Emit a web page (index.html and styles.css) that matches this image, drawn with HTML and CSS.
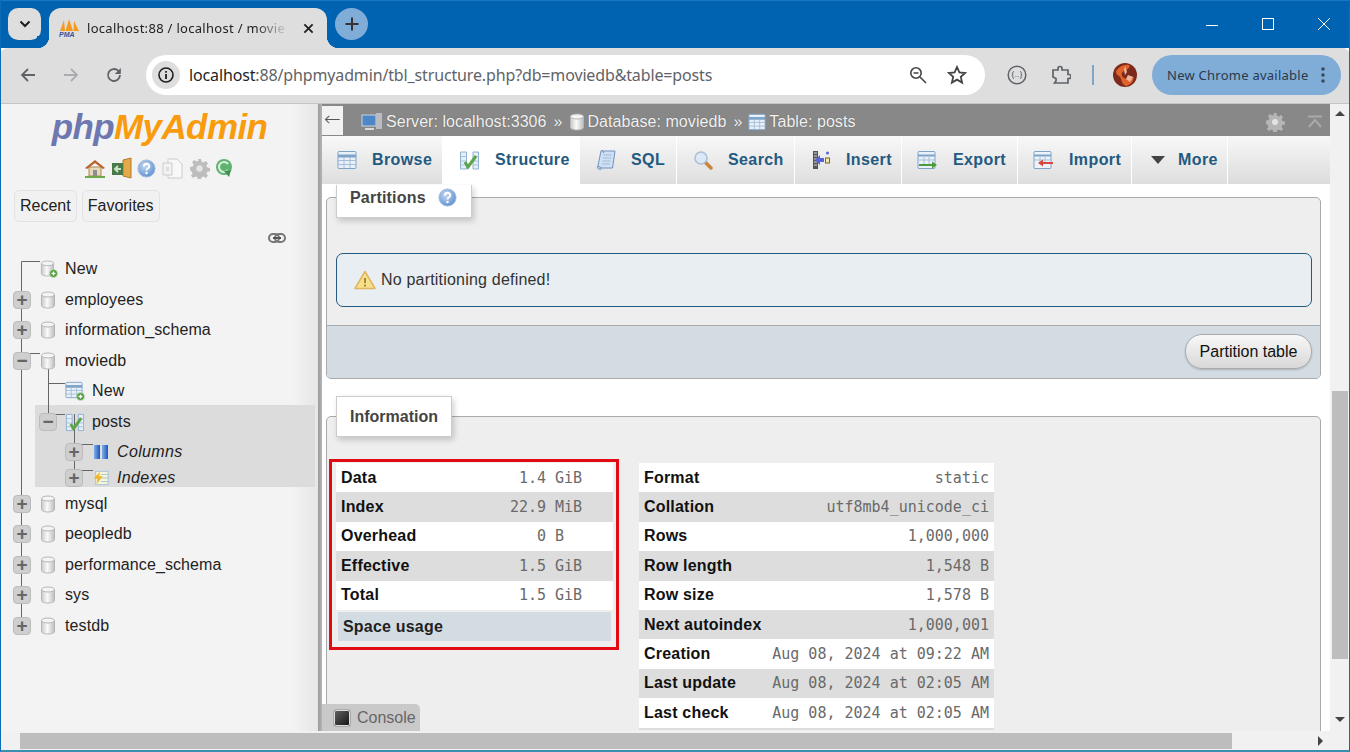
FILE: index.html
```html
<!DOCTYPE html>
<html lang="en">

<head>
    <meta charset="UTF-8">
    <meta name="viewport" content="width=device-width, initial-scale=1.0">
    <title>localhost:88 / localhost / moviedb / posts</title>
    <link rel="stylesheet" href="styles.css">
</head>

<body>

    <!-- Shared icons -->
    <svg class="icon-sprite" width="0" height="0">
        <defs>
            <linearGradient id="dbFill" x1="0" y1="0" x2="1" y2="0">
                <stop offset="0" stop-color="#c9c9c9"/><stop offset=".45" stop-color="#fafafa"/><stop offset="1" stop-color="#bdbdbd"/>
            </linearGradient>
            <linearGradient id="blueBar" x1="0" y1="0" x2="1" y2="0">
                <stop offset="0" stop-color="#7fb0ea"/><stop offset="1" stop-color="#1d55b8"/>
            </linearGradient>
            <radialGradient id="helpFill" cx=".4" cy=".35" r=".7">
                <stop offset="0" stop-color="#c5d8f2"/><stop offset="1" stop-color="#5d8fcf"/>
            </radialGradient>
        </defs>
        <symbol id="i-db" viewBox="0 0 16 18">
            <path d="M1.5 3.5v11c0 1.500 3 2.500 6.500 2.500s6.500-1 6.500-2.500v-11z" fill="url(#dbFill)" stroke="#b5b5b5"/>
            <ellipse cx="8" cy="3.500" rx="6.500" ry="2.500" fill="#f4f4f4" stroke="#b5b5b5"/>
        </symbol>
        <symbol id="i-db-new" viewBox="0 0 18 18">
            <use href="#i-db" width="15" height="17"/>
            <circle cx="13.500" cy="13.500" r="4" fill="#4d9a3a" stroke="#d8ead2" stroke-width=".7"/>
            <path d="M11.500 13.500h4M13.500 11.500v4" stroke="#fff" stroke-width="1.300"/>
        </symbol>
        <symbol id="i-table" viewBox="0 0 20 20">
            <rect x="1" y="1.500" width="18" height="17" rx="1" fill="#e9f0f8" stroke="#7ea3c9"/>
            <path d="M1 6h18" stroke="#7ea3c9" stroke-width="3"/>
            <path d="M7 7v11M13 7v11M1 10.500h18M1 14.500h18" stroke="#a4bfdb"/>
        </symbol>
        <symbol id="i-table-new" viewBox="0 0 20 20">
            <use href="#i-table" width="18" height="18"/>
            <circle cx="15.500" cy="15.500" r="4" fill="#4d9a3a" stroke="#d8ead2" stroke-width=".7"/>
            <path d="M13.500 15.500h4M15.500 13.500v4" stroke="#fff" stroke-width="1.300"/>
        </symbol>
        <symbol id="i-structure" viewBox="0 0 21 20">
            <path d="M1.500 2h6v17h-6zM14 2h5.500v17H14z" fill="#e6eef7" stroke="#8fb0d0"/>
            <path d="M1.500 6.500h6M1.500 11h6M1.500 15h6M14 6.500h5.500M14 11h5.500M14 15h5.500" stroke="#a9c3dc"/>
            <path d="M6 12l3 5 8-11" fill="none" stroke="#5aa548" stroke-width="3"/>
        </symbol>
        <symbol id="i-sql" viewBox="0 0 20 22">
            <path d="M5 2h14l-2.500 17H1.500z" fill="#cfe0f3" stroke="#6e93bd"/>
            <path d="M7.500 6h8M7 9h8M6.500 12h8M6 15h8" stroke="#9fbbd8"/>
            <path d="M1.500 19c0-2 3-2 3.500 0s-1 2-3.500 0zM5 2c1.500-1 3 0 2.500 2" fill="#b5cce6" stroke="#6e93bd"/>
        </symbol>
        <symbol id="i-search" viewBox="0 0 20 20">
            <path d="M12 12l6 6" stroke="#c9853a" stroke-width="3.500" stroke-linecap="round"/>
            <circle cx="8" cy="8" r="6" fill="#dbe9f7" stroke="#a8bfd6" stroke-width="1.500"/>
        </symbol>
        <symbol id="i-insert" viewBox="0 0 20 20">
            <path d="M2 1h5v18H2z" fill="#555"/>
            <path d="M3 3h3M3 6h3M3 9h3M3 12h3M3 15h3" stroke="#ddd"/>
            <path d="M4 10l5-5v3h4v4H9v3z" fill="#5a62d8"/>
            <rect x="14.500" y="8" width="4" height="5" fill="#f0e9a8" stroke="#7a6a20"/>
            <circle cx="16.500" cy="3" r="1.500" fill="#5a62d8"/>
        </symbol>
        <symbol id="i-export" viewBox="0 0 21 20">
            <rect x="1" y="1.500" width="17" height="17" rx="1" fill="#e9f0f8" stroke="#7ea3c9"/>
            <path d="M1 5.500h17" stroke="#7ea3c9" stroke-width="2"/>
            <path d="M7 7v7M12 7v7M1 10h17" stroke="#a4bfdb"/>
            <path d="M2 14h13v-2.500l5 3.500-5 3.500V16H2z" fill="#4d9a3a"/>
        </symbol>
        <symbol id="i-import" viewBox="0 0 21 20">
            <rect x="1" y="1.500" width="17" height="17" rx="1" fill="#eef3f9" stroke="#7ea3c9"/>
            <path d="M1 5.500h17" stroke="#7ea3c9" stroke-width="2"/>
            <path d="M7 7v7M12 7v7M1 10h17" stroke="#a4bfdb"/>
            <path d="M20 12H10V9.500L5 13l5 3.500V14h10z" fill="#d9463e"/>
        </symbol>
        <symbol id="i-gear" viewBox="0 0 20 20">
            <path d="M8.500 1h3l.5 2.600 1.800.8 2.200-1.500 2.100 2.100-1.500 2.200.8 1.800 2.600.5v3l-2.600.5-.8 1.800 1.500 2.200-2.100 2.100-2.200-1.500-1.800.8-.5 2.600h-3l-.5-2.600-1.800-.8-2.200 1.500-2.100-2.100 1.500-2.200-.8-1.800L1 11.500v-3l2.600-.5.8-1.800-1.500-2.200L5 1.900l2.200 1.500L9 2.600z" fill="currentColor"/>
            <circle cx="10" cy="10" r="3" fill="#f3f3f3" fill-opacity=".75"/>
        </symbol>
        <symbol id="i-help" viewBox="0 0 20 20">
            <circle cx="10" cy="10" r="9" fill="url(#helpFill)" stroke="#9db9de"/>
            <path d="M7.200 7.800c0-3.600 5.800-3.600 5.800-.2 0 2.200-3 2.200-3 4.400" fill="none" stroke="#fff" stroke-width="2"/>
            <circle cx="10" cy="14.800" r="1.300" fill="#fff"/>
        </symbol>
    </svg>

    <div class="window">

        <!-- Browser tab strip -->
        <div class="tabstrip">
            <div class="tab-menu">
                <svg width="14" height="10" viewBox="0 0 14 10"><path d="M2.500 2.500L7 7l4.500-4.500" fill="none" stroke="#1f1f1f" stroke-width="2"/></svg>
            </div>
            <div class="browser-tab">
                <svg class="favicon" width="21" height="19" viewBox="0 0 21 19">
                    <path d="M5 1L1 12h5zM10 0L6.500 12H14zM15 2l-.5 10H20z" fill="#f39a1f"/>
                    <text x="0" y="18" class="favicon-text">PMA</text>
                </svg>
                <span class="tab-title">localhost:88 / localhost / movie</span>
                <svg class="tab-close" width="11" height="11" viewBox="0 0 12 12"><path d="M1.500 1.500l9 9M10.500 1.500l-9 9" stroke="#1f1f1f" stroke-width="2"/></svg>
            </div>
            <div class="new-tab">
                <svg width="16" height="16" viewBox="0 0 16 16"><path d="M8 1.500v13M1.500 8h13" stroke="#333" stroke-width="2"/></svg>
            </div>
            <div class="window-controls">
                <svg width="12" height="12" viewBox="0 0 12 12"><path d="M0 7.500h12" stroke="#fff"/></svg>
                <svg width="12" height="12" viewBox="0 0 12 12"><rect x=".5" y=".5" width="11" height="11" fill="none" stroke="#fff"/></svg>
                <svg width="12" height="12" viewBox="0 0 12 12"><path d="M0 0l12 12M12 0L0 12" stroke="#fff"/></svg>
            </div>
        </div>

        <!-- Browser toolbar -->
        <div class="toolbar">
            <svg class="nav-back" width="16" height="16" viewBox="0 0 16 16"><path d="M15 8H2M8 2L2 8l6 6" fill="none" stroke="#5f6368" stroke-width="1.800"/></svg>
            <svg class="nav-forward" width="16" height="16" viewBox="0 0 16 16"><path d="M1 8h13M8 2l6 6-6 6" fill="none" stroke="#a9abae" stroke-width="1.800"/></svg>
            <svg class="nav-reload" width="16" height="16" viewBox="0 0 16 16"><path d="M14 8a6 6 0 1 1-1.800-4.300L14 5.500" fill="none" stroke="#5f6368" stroke-width="1.800"/><path d="M14.800 1v6h-6z" fill="#5f6368"/></svg>
            <div class="address-bar">
                <span class="site-info">
                    <svg width="16" height="16" viewBox="0 0 16 16"><circle cx="8" cy="8" r="7" fill="none" stroke="#1f1f1f" stroke-width="1.600"/><path d="M8 7v5M8 4v1.800" stroke="#1f1f1f" stroke-width="1.800"/></svg>
                </span>
                <span class="url"><span class="url-host">localhost</span>:88/phpmyadmin/tbl_structure.php?db=moviedb&amp;table=posts</span>
                <svg class="addr-zoom" width="18" height="18" viewBox="0 0 18 18"><circle cx="7" cy="7" r="5.200" fill="none" stroke="#444" stroke-width="1.600"/><path d="M4.500 7h5M11 11l6 6" stroke="#444" stroke-width="1.600"/></svg>
                <svg class="addr-star" width="20" height="20" viewBox="0 0 20 20"><path d="M10 2l2.400 5.400 5.800.6-4.400 3.900 1.300 5.700-5.100-3-5.100 3 1.300-5.700L1.800 8l5.800-.6z" fill="none" stroke="#444" stroke-width="1.800"/></svg>
            </div>
            <svg class="tool-code" width="20" height="20" viewBox="0 0 20 20"><circle cx="10" cy="10" r="8.800" fill="none" stroke="#5f6368" stroke-width="1.500"/><path d="M7 6.500c-1.500 0-1.200 1.300-1.200 2.300S5.300 10 4.800 10c.5 0 1 .2 1 1.200s-.3 2.300 1.200 2.300M13 6.500c1.500 0 1.200 1.300 1.200 2.300s.5 1.200 1 1.200c-.5 0-1 .2-1 1.200s.3 2.300-1.200 2.300" fill="none" stroke="#5f6368"/><path d="M8.500 11.500h.8M10.700 11.500h.8" stroke="#5f6368"/></svg>
            <svg class="tool-puzzle" width="20" height="20" viewBox="0 0 20 20"><path d="M2 5h5V3.500a2 2 0 0 1 4 0V5h6v4.500h1a2 2 0 0 1 0 4h-1V18H3.500L5 16v-2.500L2 12z" fill="none" stroke="#5f6368" stroke-width="1.700"/></svg>
            <span class="tool-sep"></span>
            <svg class="avatar" width="24" height="24" viewBox="0 0 24 24">
                <circle cx="12" cy="12" r="12" fill="#7c2a1c"/>
                <path d="M3 8c4-5 8-7 13-6 2 2-2 5-5 6s-3 5 0 7 7 1 9-2c2 4-2 9-7 10-5-2-4-7-6-9s-4-2-4-6z" fill="#e2632a"/>
                <path d="M12 3l2 6-2 3-1-5zM15 12l5 2-3 5-4-3z" fill="#e9b7a0"/>
            </svg>
            <div class="update-pill">
                <span>New Chrome available</span>
                <svg width="4" height="16" viewBox="0 0 4 16"><circle cx="2" cy="2" r="1.800" fill="#3c4a5a"/><circle cx="2" cy="8" r="1.800" fill="#3c4a5a"/><circle cx="2" cy="14" r="1.800" fill="#3c4a5a"/></svg>
            </div>
        </div>

        <div class="page">

            <!-- phpMyAdmin navigation -->
            <aside class="sidebar">
                <div class="logo"><span class="logo-php">php</span><span class="logo-my">MyAdmin</span></div>

                <div class="quick-icons">
                    <svg width="20" height="20" viewBox="0 0 20 20"><path d="M4 9h12v9H4z" fill="#e8d9b8" stroke="#a8875a"/><path d="M8 12h4v6H8z" fill="#8a8d91"/><path d="M0 10l10-8 10 8-2 1-8-6-8 6z" fill="#b8622c"/><path d="M0 19h20" stroke="#6fa84a" stroke-width="2"/></svg>
                    <svg width="21" height="22" viewBox="0 0 21 22"><path d="M12 3l8-2v20l-8-2z" fill="#e5a94a" stroke="#b27a2a"/><rect x="1" y="6" width="11" height="12" fill="#4a7a4a"/><path d="M10 12H4M7 9l-3 3 3 3" fill="none" stroke="#c8e6c0" stroke-width="2"/></svg>
                    <svg width="19" height="19"><use href="#i-help"/></svg>
                    <svg width="21" height="21" viewBox="0 0 21 21"><path d="M6 1h9l5 5v14H6z" fill="#f8f8f8" stroke="#ccc"/><path d="M1 5h9v12H1z" fill="#f2f2f2" stroke="#ccc"/><path d="M4 9h3v4H4z" fill="#ddd"/></svg>
                    <svg class="quick-gear" width="21" height="21"><use href="#i-gear"/></svg>
                    <svg width="18" height="20" viewBox="0 0 18 20"><circle cx="9" cy="9" r="8" fill="#5eb36e"/><path d="M13 6a5 5 0 1 0 0 6" fill="none" stroke="#d8eedc" stroke-width="2.200"/><path d="M9 13l7-1-2 7z" fill="#3f8f50"/></svg>
                </div>

                <div class="recent-row">
                    <span class="nav-btn">Recent</span>
                    <span class="nav-btn">Favorites</span>
                </div>

                <div class="link-row">
                    <svg width="18" height="10" viewBox="0 0 18 10"><rect x="1" y="1" width="10" height="8" rx="4" fill="none" stroke="#777" stroke-width="2"/><rect x="7" y="1" width="10" height="8" rx="4" fill="none" stroke="#777" stroke-width="2"/><path d="M5 5h8" stroke="#555" stroke-width="2"/></svg>
                </div>

                <div class="tree">
                    <!-- Tree guide lines -->
                    <svg class="tree-lines" width="120" height="380" viewBox="0 0 120 380">
                        <path d="M21.500 10.500V367M21.500 10.500H40M21.500 102.500H40M48.500 102v61M48.500 132.500H65M48.500 163.500H65M74.500 163v56M74.500 193.500H93M74.500 219.500H93" fill="none" stroke="#666"/>
                    </svg>

                    <div class="tree-row"><svg class="db-icon wide"><use href="#i-db-new"/></svg><span class="tree-new">New</span></div>
                    <div class="tree-row"><span class="expander">+</span><svg class="db-icon"><use href="#i-db"/></svg><span>employees</span></div>
                    <div class="tree-row"><span class="expander">+</span><svg class="db-icon"><use href="#i-db"/></svg><span>information_schema</span></div>
                    <div class="tree-row"><span class="expander">&minus;</span><svg class="db-icon"><use href="#i-db"/></svg><span>moviedb</span></div>
                    <div class="tree-row tree-sub"><svg class="tbl-icon"><use href="#i-table-new"/></svg><span>New</span></div>

                    <div class="tree-current">
                        <div class="tree-row tree-table"><span class="expander">&minus;</span><svg class="tbl-icon"><use href="#i-structure"/></svg><span>posts</span></div>
                        <div class="tree-row tree-child">
                            <span class="expander">+</span>
                            <svg class="child-icon" viewBox="0 0 16 16"><rect x="1" y="1" width="6" height="14" fill="url(#blueBar)"/><rect x="9" y="1" width="6" height="14" fill="url(#blueBar)"/></svg>
                            <em>Columns</em>
                        </div>
                        <div class="tree-row tree-child tree-last">
                            <span class="expander">+</span>
                            <svg class="child-icon" viewBox="0 0 18 18"><rect x="3" y="1.500" width="14" height="15" fill="#f3f6d8" stroke="#a6bfd6"/><path d="M9 5h8M9 9h8M9 13h8" stroke="#a6bfd6"/><path d="M1 9l7-7-1 5h4l-7 9 1-6z" fill="#f0b72a"/></svg>
                            <em>Indexes</em>
                        </div>
                    </div>

                    <div class="tree-row tree-after"><span class="expander">+</span><svg class="db-icon"><use href="#i-db"/></svg><span>mysql</span></div>
                    <div class="tree-row"><span class="expander">+</span><svg class="db-icon"><use href="#i-db"/></svg><span>peopledb</span></div>
                    <div class="tree-row"><span class="expander">+</span><svg class="db-icon"><use href="#i-db"/></svg><span>performance_schema</span></div>
                    <div class="tree-row"><span class="expander">+</span><svg class="db-icon"><use href="#i-db"/></svg><span>sys</span></div>
                    <div class="tree-row"><span class="expander">+</span><svg class="db-icon"><use href="#i-db"/></svg><span>testdb</span></div>
                </div>
            </aside>

            <div class="splitter"></div>

            <!-- Main panel -->
            <main class="main">
                <div class="breadcrumb">
                    <span class="back-box">&#8592;</span>
                    <svg class="crumb-icon" width="22" height="20" viewBox="0 0 22 20"><rect x="1" y="3" width="14" height="11" fill="#4d87c7" stroke="#c8d4e0"/><path d="M15 1h6v16h-6z" fill="#b9bdc2"/><path d="M4 17h9" stroke="#d8d8d8" stroke-width="2"/></svg>
                    <span>Server: localhost:3306</span><span class="crumb-sep">&raquo;</span>
                    <svg class="crumb-icon" width="16" height="18"><use href="#i-db"/></svg>
                    <span>Database: moviedb</span><span class="crumb-sep">&raquo;</span>
                    <svg class="crumb-icon" width="18" height="18"><use href="#i-table"/></svg>
                    <span>Table: posts</span>
                    <svg class="crumb-gear" width="20" height="20"><use href="#i-gear"/></svg>
                    <svg class="crumb-top" width="16" height="14" viewBox="0 0 16 14"><path d="M1 1.500h14" stroke="#aaa" stroke-width="2"/><path d="M2 12l6-7 6 7" fill="none" stroke="#aaa" stroke-width="2"/></svg>
                </div>

                <nav class="tabs">
                    <a class="tab tab-browse"><svg width="20" height="20"><use href="#i-table"/></svg>Browse</a>
                    <a class="tab tab-structure active"><svg width="21" height="20"><use href="#i-structure"/></svg>Structure</a>
                    <a class="tab tab-sql"><svg width="20" height="22"><use href="#i-sql"/></svg>SQL</a>
                    <a class="tab tab-search"><svg width="20" height="20"><use href="#i-search"/></svg>Search</a>
                    <a class="tab tab-insert"><svg width="20" height="20"><use href="#i-insert"/></svg>Insert</a>
                    <a class="tab tab-export"><svg width="21" height="20"><use href="#i-export"/></svg>Export</a>
                    <a class="tab tab-import"><svg width="21" height="20"><use href="#i-import"/></svg>Import</a>
                    <a class="tab tab-more"><svg width="16" height="10" viewBox="0 0 16 10"><path d="M1 1h14L8 9z" fill="#444"/></svg>More</a>
                </nav>

                <div class="content">
                    <section class="fieldset">
                        <div class="legend legend-partitions">Partitions <svg width="19" height="19"><use href="#i-help"/></svg></div>
                        <div class="alert">
                            <svg width="22" height="20" viewBox="0 0 22 20"><path d="M11 1.500L21 18.500H1z" fill="#f7e08c" stroke="#dfb65e" stroke-width="1.500" stroke-linejoin="round"/><path d="M11 8v5M11 14.500v2" stroke="#a8842c" stroke-width="2"/></svg>
                            No partitioning defined!
                        </div>
                        <div class="fieldset-footer"><button class="pill-btn">Partition table</button></div>
                    </section>

                    <section class="fieldset fieldset-info">
                        <div class="legend">Information</div>
                        <div class="info-tables">
                            <div class="space-usage">
                                <div class="row"><b>Data</b><span class="num">1.4</span><span class="unit">GiB</span></div>
                                <div class="row even"><b>Index</b><span class="num">22.9</span><span class="unit">MiB</span></div>
                                <div class="row"><b>Overhead</b><span class="num">0</span><span class="unit">B</span></div>
                                <div class="row even"><b>Effective</b><span class="num">1.5</span><span class="unit">GiB</span></div>
                                <div class="row"><b>Total</b><span class="num">1.5</span><span class="unit">GiB</span></div>
                                <div class="caption">Space usage</div>
                            </div>
                            <div class="row-stats">
                                <div class="row"><b>Format</b><span class="val">static</span></div>
                                <div class="row even"><b>Collation</b><span class="val">utf8mb4_unicode_ci</span></div>
                                <div class="row"><b>Rows</b><span class="val">1,000,000</span></div>
                                <div class="row even"><b>Row length</b><span class="val">1,548 B</span></div>
                                <div class="row"><b>Row size</b><span class="val">1,578 B</span></div>
                                <div class="row even"><b>Next autoindex</b><span class="val">1,000,001</span></div>
                                <div class="row"><b>Creation</b><span class="val">Aug 08, 2024 at 09:22 AM</span></div>
                                <div class="row even"><b>Last update</b><span class="val">Aug 08, 2024 at 02:05 AM</span></div>
                                <div class="row"><b>Last check</b><span class="val">Aug 08, 2024 at 02:05 AM</span></div>
                            </div>
                        </div>
                    </section>
                </div>

                <div class="console-tab">
                    <span class="console-icon"></span>Console
                </div>
            </main>

            <!-- Vertical scrollbar -->
            <div class="vscroll">
                <span class="arrow-up"></span>
                <span class="vthumb"></span>
                <span class="arrow-down"></span>
            </div>
        </div>

        <!-- Horizontal scrollbar -->
        <div class="hscroll">
            <span class="hthumb"></span>
            <span class="arrow-right"></span>
        </div>
    </div>

</body>

</html>
```

FILE: styles.css
```css
/* General Reset */
* {
    margin: 0;
    padding: 0;
    box-sizing: border-box;
}

body {
    font-family: 'Liberation Sans', Arial, sans-serif;
    font-size: 16px;
    color: #222;
    background: #fff;
    overflow: hidden;
}

.icon-sprite {
    position: absolute;
}

.window {
    width: 1350px;
    height: 752px;
    display: flex;
    flex-direction: column;
    overflow: hidden;
    border-left: 1px solid #0c6cb8;
    border-right: 1px solid #0c6cb8;
    border-bottom: 2px solid #3a8fb0;
}

/* Browser tab strip */
.tabstrip {
    height: 48px;
    flex: none;
    margin: 0 -1px;
    background: #0063b1;
    border-top: 1px solid #1a78c2;
    display: flex;
    align-items: flex-start;
    font-family: 'Noto Sans', sans-serif;
}

.tab-menu {
    width: 33px;
    height: 32px;
    margin: 7px 0 0 8px;
    background: #dedede;
    border-radius: 10px;
    display: flex;
    align-items: center;
    justify-content: center;
}

.browser-tab {
    position: relative;
    width: 278px;
    height: 40px;
    margin: 7px 0 0 8px;
    background: #dedede;
    border-radius: 12px 12px 0 0;
    display: flex;
    align-items: center;
    padding-left: 10px;
    font-size: 13px;
    color: #222;
}

.browser-tab::before,
.browser-tab::after {
    content: "";
    position: absolute;
    bottom: 0;
    width: 12px;
    height: 12px;
}

.browser-tab::before {
    left: -12px;
    background: radial-gradient(circle at 0 0, #0063b1 12px, #dedede 12.5px);
}

.browser-tab::after {
    right: -12px;
    background: radial-gradient(circle at 100% 0, #0063b1 12px, #dedede 12.5px);
}

.favicon {
    flex: none;
}

.favicon-text {
    font-family: 'Liberation Sans', sans-serif;
    font-size: 7px;
    font-weight: bold;
    font-style: italic;
    fill: #3a4f96;
}

.tab-title {
    width: 198px;
    margin-left: 7px;
    white-space: nowrap;
    overflow: hidden;
    letter-spacing: 0.3px;
    -webkit-mask-image: linear-gradient(to right, #000 85%, transparent 102%);
    mask-image: linear-gradient(to right, #000 85%, transparent 102%);
}

.tab-close {
    margin-left: 18px;
}

.new-tab {
    width: 33px;
    height: 32px;
    margin: 7px 0 0 8px;
    background: #7fadd8;
    border-radius: 50%;
    display: flex;
    align-items: center;
    justify-content: center;
}

.window-controls {
    margin: 17px 20px 0 auto;
    display: flex;
    gap: 44px;
}

/* Browser toolbar */
.toolbar {
    height: 56px;
    flex: none;
    margin: 0 -1px;
    padding-bottom: 1px;
    background: #dedede;
    border-radius: 8px 8px 0 0;
    border-bottom: 1px solid #c4c4c4;
    display: flex;
    align-items: center;
    font-family: 'Noto Sans', sans-serif;
}

.nav-back {
    margin-left: 20px;
}

.nav-forward {
    margin-left: 27px;
}

.nav-reload {
    margin-left: 27px;
}

.address-bar {
    width: 839px;
    height: 40px;
    margin-left: 24px;
    background: #fff;
    border-radius: 20px;
    display: flex;
    align-items: center;
    padding-left: 6px;
}

.site-info {
    width: 28px;
    height: 28px;
    background: #dedede;
    border-radius: 50%;
    display: flex;
    align-items: center;
    justify-content: center;
    flex: none;
}

.url {
    margin-left: 9px;
    font-size: 16px;
    color: #5f6368;
    white-space: nowrap;
    letter-spacing: -0.14px;
}

.url-host {
    color: #1f1f1f;
}

.addr-zoom {
    margin-left: auto;
}

.addr-star {
    margin: 0 18px 0 20px;
}

.tool-code {
    margin-left: 22px;
}

.tool-puzzle {
    margin-left: 24px;
}

.tool-sep {
    width: 2px;
    height: 20px;
    margin-left: 21px;
    background: #7fa6c8;
}

.avatar {
    margin-left: 19px;
    flex: none;
}

.update-pill {
    width: 189px;
    height: 40px;
    margin-left: 15px;
    background: #7fadd8;
    border-radius: 20px;
    display: flex;
    align-items: center;
    padding: 0 16px 0 15px;
    font-size: 13px;
    letter-spacing: 0.25px;
    color: #2a3a4c;
    justify-content: space-between;
    white-space: nowrap;
}

/* Page area */
.page {
    flex: 1;
    min-height: 0;
    display: flex;
}

.sidebar {
    width: 317px;
    flex: none;
    background: linear-gradient(to right, #f3f3f3 92%, #e6e6e6);
    display: flex;
    flex-direction: column;
    overflow: hidden;
    color: #222;
}

.logo {
    height: 46px;
    padding-top: 2px;
    text-align: center;
    font-size: 35px;
    font-weight: bold;
    font-style: italic;
    letter-spacing: -0.6px;
    line-height: 42px;
}

.logo-php {
    color: #6c78af;
}

.logo-my {
    color: #f89c0e;
}

.quick-icons {
    height: 40px;
    padding: 0 0 4px 84px;
    display: flex;
    align-items: center;
    gap: 5.7px;
}

.quick-gear {
    color: #bdbdbd;
}

.recent-row {
    display: flex;
    gap: 5px;
    padding-left: 13px;
}

.nav-btn {
    height: 32px;
    padding: 0 5px;
    line-height: 30px;
    border: 1px solid #e2e2e2;
    border-radius: 5px;
    background: #f1f1f1;
}

.link-row {
    height: 32px;
    padding: 7px 32px 0 0;
    text-align: right;
}

.tree {
    position: relative;
    letter-spacing: 0.1px;
}

.tree-lines {
    position: absolute;
    left: -1px;
    top: -3px;
}

.tree-row {
    position: relative;
    height: 30.5px;
    display: flex;
    align-items: center;
    white-space: nowrap;
    padding-left: 12px;
}

.tree-row .tree-new {
    margin-left: 7px;
}

.expander {
    width: 18px;
    height: 18px;
    flex: none;
    background: #cfcfcf;
    border: 1px solid #bbb;
    border-radius: 4px;
    color: #666;
    font-size: 19px;
    font-weight: bold;
    line-height: 15px;
    text-align: center;
}

.db-icon {
    width: 16px;
    height: 18px;
    margin: 0 9px;
    flex: none;
}

.db-icon.wide {
    width: 18px;
    height: 18px;
    margin: 0 0 0 27px;
}

.tree-sub {
    padding-left: 64px;
}

.tbl-icon {
    width: 20px;
    height: 20px;
    margin-right: 7px;
    flex: none;
}

.tree-current {
    height: 82px;
    margin: -1.75px 3px 0 34px;
    padding-top: 1.75px;
    background: #dcdcdc;
    overflow: hidden;
}

.tree-table {
    padding-left: 4px;
}

.tree-table .expander {
    margin-right: 8px;
}

.tree-child {
    padding-left: 30px;
}

.tree-child em {
    font-style: italic;
    letter-spacing: 0.35px;
}

.tree-last {
    height: 21.5px;
}

.child-icon {
    width: 16px;
    height: 16px;
    margin: 0 8px 0 10px;
    flex: none;
}

.tree-after {
    margin-top: 1.75px;
}

.splitter {
    width: 4px;
    flex: none;
    background: linear-gradient(to right, #999, #b5b5b5);
}

/* Main panel */
.main {
    position: relative;
    flex: 1;
    min-width: 0;
    display: flex;
    flex-direction: column;
    background: #fff;
}

.breadcrumb {
    height: 32px;
    flex: none;
    background: #888;
    color: #f2f2f2;
    display: flex;
    align-items: center;
    padding-top: 4px;
    white-space: nowrap;
    text-shadow: 0 0 1px #555;
    letter-spacing: 0.06px;
}

.back-box {
    width: 21px;
    height: 29px;
    margin: -3px 18px 0 0;
    background: #f2f2f2;
    color: #555;
    text-shadow: none;
    text-align: center;
    font-size: 20px;
    font-family: 'DejaVu Sans', sans-serif;
    font-weight: 200;
    line-height: 26px;
}

.crumb-icon {
    margin-right: 3px;
    flex: none;
}

.crumb-sep {
    margin: 0 6px 0 7px;
}

.crumb-gear {
    margin-left: auto;
    color: #b5b5b5;
}

.crumb-top {
    margin: 0 7px 0 22px;
}

.tabs {
    height: 48px;
    flex: none;
    position: relative;
    z-index: 2;
    display: flex;
    padding-left: 1px;
    background: linear-gradient(to bottom, #f7f7f7, #dcdcdc);
}

.tab {
    height: 48px;
    padding-left: 16px;
    display: flex;
    align-items: center;
    gap: 15px;
    font-weight: bold;
    letter-spacing: 0.4px;
    color: #235a81;
    border-right: 1px solid #fff;
    background: linear-gradient(to bottom, #f8f8f8, #dedede);
}

.tab svg {
    flex: none;
}

.tab.active {
    background: #fff;
}

.tab-browse {
    width: 120px;
    padding-left: 14px;
}

.tab-structure {
    width: 137px;
}

.tab-sql {
    width: 97px;
}

.tab-search {
    width: 118px;
}

.tab-insert {
    width: 107px;
}

.tab-export {
    width: 116px;
    padding-left: 15px;
}

.tab-import {
    width: 114px;
    padding-left: 15px;
}

.tab-more {
    width: 96px;
    padding-left: 18px;
    gap: 12px;
}

.content {
    flex: 1;
    min-height: 0;
    overflow: hidden;
    padding: 13px 9px 0 4px;
}

.fieldset {
    position: relative;
    background: #eee;
    border: 1px solid #aaa;
    border-radius: 5px;
}

.legend {
    width: max-content;
    height: 41px;
    margin: -21px 0 0 9px;
    padding: 0 13px;
    background: #fff;
    border: 1px solid #ccc;
    box-shadow: 2px 3px 6px rgba(0, 0, 0, 0.18);
    font-weight: bold;
    color: #444;
    line-height: 39px;
}

.legend-partitions {
    height: 33px;
    margin-top: -13px;
    display: flex;
    align-items: center;
    gap: 12px;
    padding: 0 14px 8px 13px;
    border-top: 0;
    letter-spacing: 0.2px;
}

.alert {
    height: 54px;
    margin: 35px 8px 18px 9px;
    padding-left: 17px;
    display: flex;
    align-items: center;
    gap: 5px;
    background: #e8eef1;
    border: 1px solid #235a81;
    border-radius: 7px;
    color: #333;
    letter-spacing: 0.2px;
}

.fieldset-footer {
    height: 53px;
    padding: 8px 8px 0 0;
    background: #d3dce3;
    border-top: 1px solid #aaa;
    text-align: right;
    border-radius: 0 0 4px 4px;
}

.pill-btn {
    height: 35px;
    width: 127px;
    font: 16px 'Liberation Sans', sans-serif;
    color: #111;
    border: 1px solid #aaa;
    border-radius: 17px;
    background: linear-gradient(to bottom, #f8f8f8, #d8d8d8);
    box-shadow: 0 1px 2px rgba(0, 0, 0, 0.2);
}

.fieldset-info {
    margin-top: 37px;
    height: 400px;
}

.info-tables {
    display: flex;
    align-items: flex-start;
    gap: 20px;
    margin: 22px 0 0 2px;
}

.space-usage {
    width: 290px;
    height: 191px;
    padding: 1px 3px 0 4px;
    border: 3px solid #e30b13;
}

.row-stats {
    width: 355px;
    margin-top: 4px;
    border-bottom: 2px solid #ddd;
}

.row {
    height: 29.4px;
    display: flex;
    align-items: center;
    padding: 0 5px;
    background: #fff;
    color: #111;
}

.row b {
    letter-spacing: 0.2px;
}

.row.even {
    background: #ddd;
}

.num,
.unit,
.val {
    font-family: 'DejaVu Sans Mono', monospace;
    font-size: 15px;
    color: #6a6a6a;
}

.num {
    margin-left: auto;
    margin-right: 9px;
}

.unit {
    width: 58px;
    flex: none;
    margin-right: -5px;
}

.val {
    margin-left: auto;
    white-space: nowrap;
}

.caption {
    height: 29px;
    margin: 2px 2px 0;
    padding-left: 5px;
    background: #d3dce3;
    font-weight: bold;
    letter-spacing: 0.2px;
    color: #222;
    line-height: 29px;
}

/* Console tab sits over the panel */
.console-tab {
    position: absolute;
    left: 0;
    bottom: 0;
    width: 98px;
    height: 27px;
    display: flex;
    align-items: center;
    gap: 6px;
    padding: 1px 0 0 11px;
    background: #c9c9c9;
    border-radius: 0 5px 0 0;
    color: #666;
}

.console-icon {
    width: 18px;
    height: 18px;
    border: 1px solid #aaa;
    border-radius: 3px;
    background: linear-gradient(to bottom right, #666, #111);
    box-shadow: inset 0 0 0 1px #ddd;
}

/* Scrollbars */
.vscroll {
    position: relative;
    width: 19px;
    flex: none;
    background: #f1f1f1;
    display: flex;
    flex-direction: column;
}

.vthumb {
    width: 16px;
    height: 268px;
    margin: 287px 0 0 2px;
    background: #bdbdbd;
}

.arrow-up {
    position: absolute;
    top: 7px;
    left: 5px;
    border: 5px solid transparent;
    border-top: 0;
    border-bottom: 5px solid #444;
}

.arrow-down {
    position: absolute;
    top: 613px;
    left: 5px;
    border: 5px solid transparent;
    border-bottom: 0;
    border-top: 5px solid #444;
}

.hscroll {
    position: relative;
    height: 19px;
    flex: none;
    background: #f1f1f1;
    padding-top: 2px;
}

.hthumb {
    display: block;
    width: 1212px;
    height: 16px;
    margin-left: 19px;
    background: #bdbdbd;
}

.arrow-right {
    position: absolute;
    top: 5px;
    left: 1317px;
    border: 5px solid transparent;
    border-right: 0;
    border-left: 5px solid #444;
}
```
